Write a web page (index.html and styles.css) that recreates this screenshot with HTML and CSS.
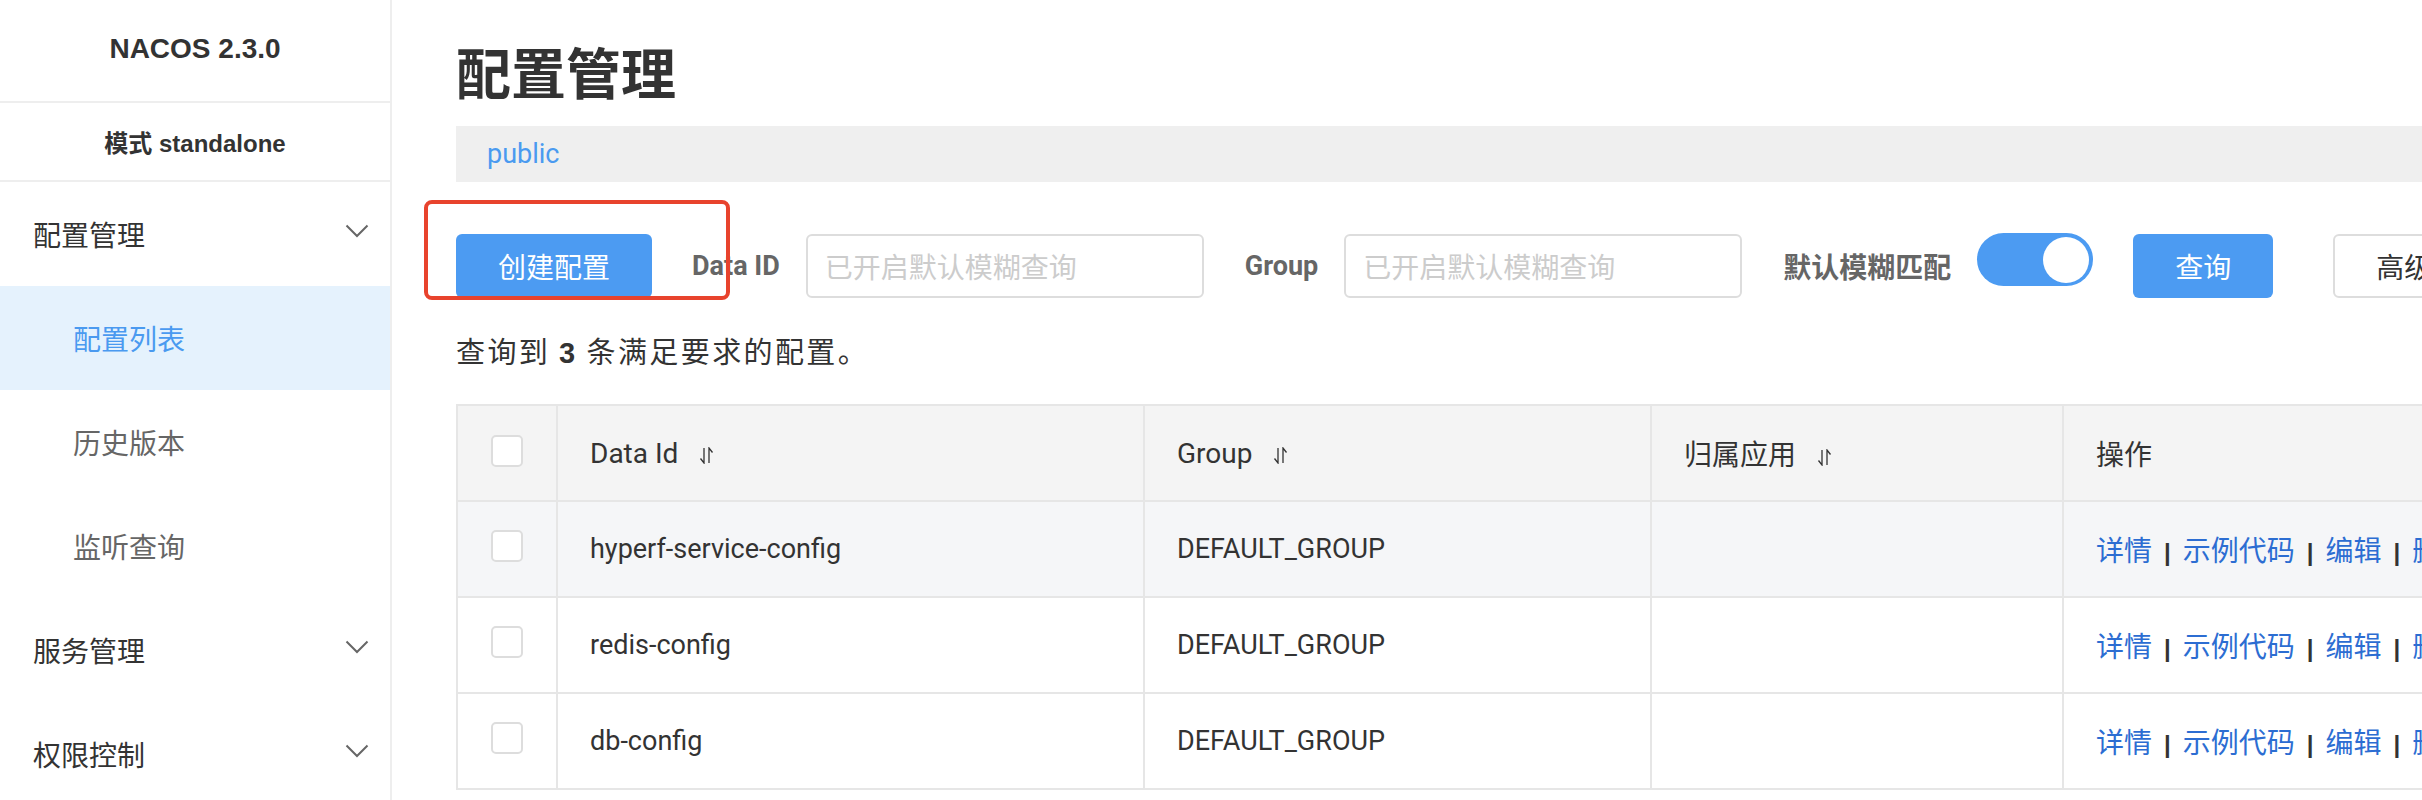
FILE: index.html
```html
<!DOCTYPE html>
<html lang="zh-CN">
<head>
<meta charset="utf-8">
<title>配置管理 - Nacos</title>
<link rel="stylesheet" href="styles.css">
</head>
<body>
<aside class="sidebar">
  <div class="brand">NACOS 2.3.0</div>
  <div class="mode">模式 standalone</div>
  <nav class="menu">
    <div class="menu-item group">配置管理
      <svg class="chev" width="24" height="14" viewBox="0 0 24 14"><polyline points="1.5,1.5 12,12 22.5,1.5" fill="none" stroke="#666" stroke-width="2"/></svg>
    </div>
    <div class="menu-item sub active">配置列表</div>
    <div class="menu-item sub">历史版本</div>
    <div class="menu-item sub">监听查询</div>
    <div class="menu-item group">服务管理
      <svg class="chev" width="24" height="14" viewBox="0 0 24 14"><polyline points="1.5,1.5 12,12 22.5,1.5" fill="none" stroke="#666" stroke-width="2"/></svg>
    </div>
    <div class="menu-item group">权限控制
      <svg class="chev" width="24" height="14" viewBox="0 0 24 14"><polyline points="1.5,1.5 12,12 22.5,1.5" fill="none" stroke="#666" stroke-width="2"/></svg>
    </div>
  </nav>
</aside>
<main class="main">
  <h1 class="title">配置管理</h1>
  <div class="ns-bar"><span class="ns">public</span></div>
  <div class="toolbar">
    <div class="annot"></div>
    <button class="btn primary create">创建配置</button>
    <span class="label">Data ID</span>
    <div class="input">已开启默认模糊查询</div>
    <span class="label">Group</span>
    <div class="input">已开启默认模糊查询</div>
    <span class="label cjk">默认模糊匹配</span>
    <div class="switch"><div class="knob"></div></div>
    <button class="btn primary query">查询</button>
    <button class="btn outline adv">高级查询</button>
  </div>
  <p class="summary">查询到 <b>3</b> 条满足要求的配置。</p>
  <table class="grid">
    <colgroup>
      <col class="c-check"><col class="c-id"><col class="c-group"><col class="c-app"><col class="c-op">
    </colgroup>
    <thead>
      <tr>
        <th class="check"><span class="box"></span></th>
        <th>Data Id<svg class="sort" width="16" height="17" viewBox="0 0 16 17"><path d="M5 1V16L1.5 11.5M10 16V1L13.5 5.5" fill="none" stroke="#333" stroke-width="1.3"/></svg></th>
        <th>Group<svg class="sort" width="16" height="17" viewBox="0 0 16 17"><path d="M5 1V16L1.5 11.5M10 16V1L13.5 5.5" fill="none" stroke="#333" stroke-width="1.3"/></svg></th>
        <th>归属应用<svg class="sort" width="16" height="17" viewBox="0 0 16 17"><path d="M5 1V16L1.5 11.5M10 16V1L13.5 5.5" fill="none" stroke="#333" stroke-width="1.3"/></svg></th>
        <th>操作</th>
      </tr>
    </thead>
    <tbody>
      <tr class="hover">
        <td class="check"><span class="box"></span></td>
        <td>hyperf-service-config</td>
        <td>DEFAULT_GROUP</td>
        <td></td>
        <td class="ops"><a>详情</a><span class="sep">|</span><a>示例代码</a><span class="sep">|</span><a>编辑</a><span class="sep">|</span><a>删除</a><span class="sep">|</span><a>更多</a></td>
      </tr>
      <tr>
        <td class="check"><span class="box"></span></td>
        <td>redis-config</td>
        <td>DEFAULT_GROUP</td>
        <td></td>
        <td class="ops"><a>详情</a><span class="sep">|</span><a>示例代码</a><span class="sep">|</span><a>编辑</a><span class="sep">|</span><a>删除</a><span class="sep">|</span><a>更多</a></td>
      </tr>
      <tr>
        <td class="check"><span class="box"></span></td>
        <td>db-config</td>
        <td>DEFAULT_GROUP</td>
        <td></td>
        <td class="ops"><a>详情</a><span class="sep">|</span><a>示例代码</a><span class="sep">|</span><a>编辑</a><span class="sep">|</span><a>删除</a><span class="sep">|</span><a>更多</a></td>
      </tr>
    </tbody>
  </table>
</main>
</body>
</html>
```
FILE: styles.css
```css
* { box-sizing: border-box; }
html, body { margin: 0; padding: 0; }
body {
  width: 2422px;
  height: 800px;
  overflow: hidden;
  display: flex;
  background: #fff;
  color: #333;
  font-family: Roboto, "Noto Sans CJK SC", sans-serif;
}

/* Sidebar */
.sidebar {
  width: 392px;
  flex: none;
  height: 800px;
  border-right: 2px solid #eee;
}
.brand {
  height: 103px;
  border-bottom: 2px solid #eee;
  display: flex;
  align-items: center;
  justify-content: center;
  padding-bottom: 4px;
  font: bold 28px "Liberation Sans", "Noto Sans CJK SC", sans-serif;
  color: #333;
}
.mode {
  height: 79px;
  border-bottom: 2px solid #eee;
  display: flex;
  align-items: center;
  justify-content: center;
  font: bold 24px "Liberation Sans", "Noto Sans CJK SC", sans-serif;
  color: #333;
}
.menu-item {
  height: 104px;
  display: flex;
  align-items: center;
  font-size: 28px;
  font-family: "Noto Sans CJK SC", sans-serif;
}
.menu-item.group {
  padding-left: 33px;
  padding-right: 21px;
  color: #333;
}
.menu-item.sub {
  padding-left: 73px;
  color: #666;
}
.menu-item.active {
  background: #e5f2fd;
  color: #4a9af0;
}
.chev {
  margin-left: auto;
  margin-top: -6px;
}

/* Main */
.main {
  flex: 1;
  min-width: 0;
  padding-left: 64px;
  overflow: hidden;
}
.title {
  margin: 42px 0 0;
  height: 56px;
  line-height: 56px;
  font-size: 55px;
  font-weight: bold;
  font-family: "Noto Sans CJK SC", sans-serif;
  color: #333;
}
.ns-bar {
  margin-top: 28px;
  height: 56px;
  width: 2100px;
  background: #efefef;
  padding-left: 31px;
  line-height: 56px;
}
.ns {
  color: #4a9af0;
  font-size: 27px;
}

.toolbar {
  position: relative;
  margin-top: 52px;
  height: 64px;
  width: 2200px;
  display: flex;
  align-items: center;
}
.annot {
  position: absolute;
  left: -32px;
  top: -34px;
  width: 306px;
  height: 100px;
  border: 4px solid #e8432d;
  border-radius: 8px;
  pointer-events: none;
}
.btn {
  flex: none;
  height: 64px;
  border-radius: 6px;
  font-size: 28px;
  font-family: "Noto Sans CJK SC", sans-serif;
  padding: 0;
  cursor: pointer;
}
.btn.primary {
  background: #4c9bf2;
  border: none;
  color: #fff;
}
.btn.create { width: 196px; margin-right: 40px; }
.btn.query { width: 140px; margin-right: 60px; }
.btn.outline {
  background: #fff;
  border: 2px solid #ddd;
  color: #333;
  padding: 0 41px;
}
.label {
  flex: none;
  font-size: 27px;
  font-weight: bold;
  color: #666;
  margin-right: 26px;
}
.label.cjk { font-size: 28px; font-family: "Noto Sans CJK SC", sans-serif; }
.input {
  flex: none;
  width: 398px;
  height: 64px;
  border: 2px solid #ddd;
  border-radius: 6px;
  padding-left: 17px;
  display: flex;
  align-items: center;
  color: #ccc;
  font-size: 28px;
  font-family: "Noto Sans CJK SC", sans-serif;
  margin-right: 41px;
}
.switch {
  flex: none;
  width: 116px;
  height: 53px;
  border-radius: 27px;
  background: #4c9bf2;
  margin-right: 40px;
  margin-bottom: 13px;
  display: flex;
  align-items: center;
  justify-content: flex-end;
  padding-right: 4px;
}
.knob {
  width: 46px;
  height: 46px;
  border-radius: 50%;
  background: #fff;
}

.summary {
  margin: 32px 0 0;
  height: 40px;
  line-height: 40px;
  font-size: 29px;
  letter-spacing: 2.4px;
  color: #333;
  font-family: "Noto Sans CJK SC", sans-serif;
}
.summary b { font-family: "Liberation Sans", sans-serif; font-weight: bold; }

/* Table */
.grid {
  margin-top: 34px;
  width: 2100px;
  table-layout: fixed;
  border-collapse: collapse;
  font-size: 27px;
  color: #333;
}
.c-check { width: 100px; }
.c-id { width: 587px; }
.c-group { width: 507px; }
.c-app { width: 412px; }
.c-op { width: 494px; }
.grid th, .grid td {
  border: 2px solid #e6e6e6;
  height: 96px;
  padding: 0 0 0 32px;
  text-align: left;
  white-space: nowrap;
  overflow: hidden;
}
.grid th {
  background: #f4f4f4;
  font-weight: normal;
  font-size: 28px;
}
.grid tr.hover td { background: #f5f6f8; }
.grid .check { padding: 0; text-align: center; }
.box {
  display: inline-block;
  width: 32px;
  height: 32px;
  border: 2px solid #ddd;
  border-radius: 5px;
  background: #fff;
  vertical-align: middle;
  margin-top: -9px;
}
.sort {
  margin-left: 21px;
  vertical-align: -1px;
}
.ops {
  font-size: 28px;
  font-family: "Noto Sans CJK SC", sans-serif;
}
.ops a {
  color: #2c6dd2;
  cursor: pointer;
}
.ops .sep {
  color: #333;
  font-weight: bold;
  margin: 0 12px;
  font-family: "Liberation Sans", sans-serif;
  font-size: 24px;
}
```
